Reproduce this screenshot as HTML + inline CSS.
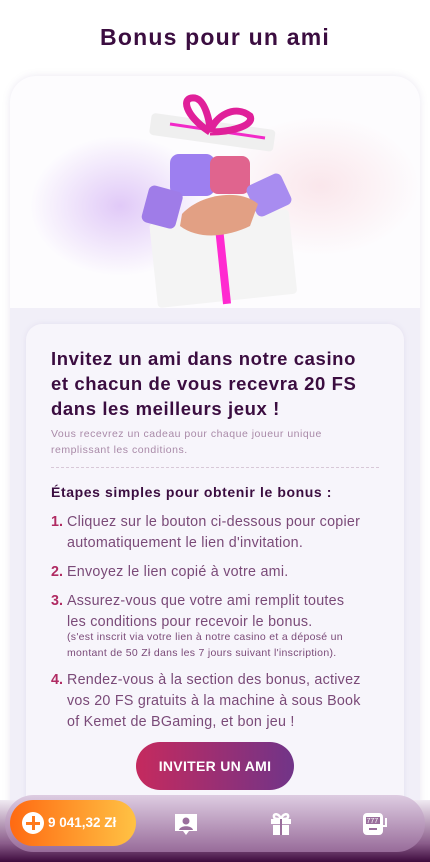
<!DOCTYPE html>
<html><head><meta charset="utf-8"><style>
*{margin:0;padding:0;box-sizing:border-box}
html,body{width:430px;height:862px;overflow:hidden}
body{background:#fff;font-family:"Liberation Sans",sans-serif;color:#3b1140;position:relative}
h1{position:absolute;top:24px;width:100%;text-align:center;font-size:23px;font-weight:bold;color:#3b0d40;letter-spacing:1.2px}
.card{position:absolute;left:10px;top:76px;width:410px;height:800px;border-radius:26px;background:#f1eff8;overflow:hidden;box-shadow:0 0 8px rgba(120,100,160,.15)}
.hero{position:absolute;left:0;top:0;width:410px;height:232px;background:
radial-gradient(ellipse 90px 70px at 110px 130px,rgba(190,140,240,.45),transparent),
radial-gradient(ellipse 100px 70px at 310px 110px,rgba(245,190,200,.35),transparent),#fdfcfe}
.inner{position:absolute;left:16px;top:248px;width:378px;height:560px;border-radius:16px;background:#f7f5fb;box-shadow:0 0 6px rgba(140,120,180,.12)}
.t{position:absolute;left:51px;font-size:18.5px;font-weight:bold;line-height:25px;top:346px;color:#3b0d40;letter-spacing:.6px;white-space:nowrap}
.sub{position:absolute;left:51px;top:426px;font-size:10.5px;line-height:16px;color:#a98aa8;letter-spacing:.5px;white-space:nowrap}
.dash{position:absolute;left:51px;top:467px;width:328px;border-top:1px dashed #d8c8d8}
.st{position:absolute;left:51px;top:484px;font-size:14px;font-weight:bold;color:#3b0d40;letter-spacing:.6px}
.l{position:absolute;left:67px;font-size:14.3px;line-height:21px;color:#7a4a78;white-space:nowrap;letter-spacing:.25px}
.n{position:absolute;left:51px;font-size:14.3px;line-height:21px;color:#b02a62;font-weight:bold}
.s{position:absolute;left:67px;font-size:10.5px;line-height:16px;color:#7a4a78;white-space:nowrap;letter-spacing:.3px}
.btn{position:absolute;left:136px;top:742px;width:158px;height:48px;border-radius:24px;background:linear-gradient(90deg,#c52a5e,#713488);color:#fff;font-weight:bold;font-size:14px;text-align:center;line-height:48px;letter-spacing:.3px}
.fade{position:absolute;left:0;top:800px;width:430px;height:62px;background:linear-gradient(#f0eaf2,#8a5c8a 70%,#3d0b3d)}
.bar{position:absolute;left:5px;top:795px;width:420px;height:57px;border-radius:29px;background:linear-gradient(#dccae0,#9a6e9c);opacity:.95}
.bal{position:absolute;left:10px;top:800px;width:126px;height:46px;border-radius:23px;background:linear-gradient(90deg,#ff6a12,#ffc244);color:#fff;font-weight:bold;font-size:13.5px;line-height:46px;padding-left:38px}
.plus{position:absolute;left:12px;top:12px;width:22px;height:22px;border-radius:50%;background:#fff}
.plus:before,.plus:after{content:"";position:absolute;background:#ff7a1c;left:10px;top:4px;width:3px;height:14px}
.plus:after{left:4px;top:10px;width:14px;height:3px}
</style></head><body>
<h1>Bonus pour un ami</h1>
<div class="card"><div class="hero">
<svg width="410" height="232" viewBox="0 0 410 232">
<rect x="143" y="140" width="140" height="85" rx="4" fill="#f4f4f4" transform="rotate(-6 213 180)"/>
<rect x="208" y="148" width="8" height="80" fill="#ff2ad0" transform="rotate(-6 213 180)"/>
<rect x="140" y="45" width="125" height="22" rx="4" fill="#efefef" transform="rotate(8 200 55)"/>
<path d="M160 48 L255 62" stroke="#f22ac8" stroke-width="3"/>
<path d="M200 56 C175 40 170 20 185 22 C195 24 200 45 200 56 C205 40 225 28 240 40 C245 50 220 56 200 56" fill="none" stroke="#e0209a" stroke-width="7"/>
<rect x="160" y="78" width="45" height="42" rx="9" fill="#9d7ff0"/>
<rect x="200" y="80" width="40" height="38" rx="8" fill="#e0648e"/>
<rect x="135" y="112" width="35" height="38" rx="6" fill="#9f7ce8" transform="rotate(15 152 130)"/>
<rect x="240" y="102" width="38" height="34" rx="6" fill="#a88cf0" transform="rotate(-25 259 119)"/>
<path d="M172 138 C190 118 230 112 248 128 L240 150 C220 160 190 165 170 150Z" fill="#e2a084"/>
</svg></div>
<div class="inner"></div></div>
<div class="t">Invitez un ami dans notre casino<br>et chacun de vous recevra 20 FS<br>dans les meilleurs jeux !</div>
<div class="sub">Vous recevrez un cadeau pour chaque joueur unique<br>remplissant les conditions.</div>
<div class="dash"></div>
<div class="st">Étapes simples pour obtenir le bonus :</div>
<div class="n" style="top:512px">1.</div>
<div class="l" style="top:512px">Cliquez sur le bouton ci-dessous pour copier<br>automatiquement le lien d'invitation.</div>
<div class="n" style="top:562px">2.</div>
<div class="l" style="top:562px">Envoyez le lien copié à votre ami.</div>
<div class="n" style="top:591px">3.</div>
<div class="l" style="top:591px">Assurez-vous que votre ami remplit toutes<br>les conditions pour recevoir le bonus.</div>
<div class="s" style="top:629px">(s'est inscrit via votre lien à notre casino et a déposé un<br>montant de 50 Zł dans les 7 jours suivant l'inscription).</div>
<div class="n" style="top:670px">4.</div>
<div class="l" style="top:670px">Rendez-vous à la section des bonus, activez<br>vos 20 FS gratuits à la machine à sous Book<br>of Kemet de BGaming, et bon jeu !</div>
<div class="btn">INVITER UN AMI</div>
<div class="fade"></div>
<div class="bar"></div>
<div class="bal"><div class="plus"></div>9 041,32 Zł</div>
<svg style="position:absolute;left:174px;top:813px" width="24" height="24" viewBox="0 0 24 24"><path d="M1 1h22v17h-8l-3 4-3-4H1z" fill="#fff"/><circle cx="12" cy="8" r="3.5" fill="#9a6e9c"/><path d="M5 17c1-5 13-5 14 0z" fill="#9a6e9c"/></svg>
<svg style="position:absolute;left:270px;top:812px" width="22" height="24" viewBox="0 0 22 24"><path d="M1 7h20v5H1zM3 13h16v10H3z" fill="#fff"/><path d="M11 7c-2-6-8-6-7-2 0 2 4 2 7 2 3 0 7 0 7-2 1-4-5-4-7 2" fill="none" stroke="#fff" stroke-width="2.5"/><rect x="10" y="7" width="2" height="16" fill="#9a6e9c"/></svg>
<svg style="position:absolute;left:362px;top:812px" width="26" height="24" viewBox="0 0 26 24"><rect x="1" y="1" width="20" height="22" rx="4" fill="#fff"/><rect x="4" y="5" width="14" height="7" fill="#9a6e9c"/><text x="4.5" y="11" font-size="7" fill="#fff" font-family="Liberation Sans">777</text><rect x="7" y="16" width="8" height="2" fill="#9a6e9c"/><path d="M21 14h3V6" stroke="#fff" stroke-width="2" fill="none"/></svg>
</body></html>
